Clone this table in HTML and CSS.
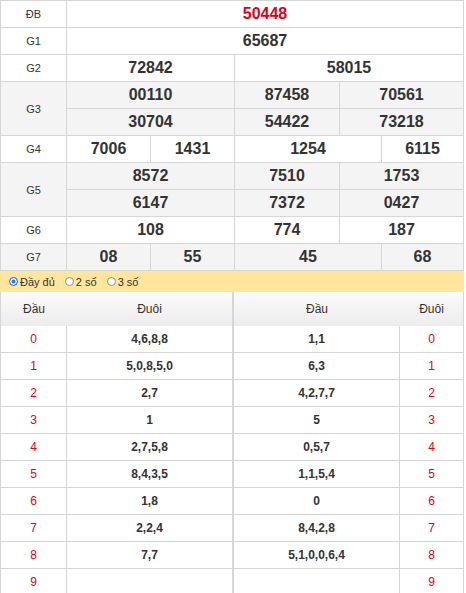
FILE: index.html
```html
<!DOCTYPE html>
<html lang="vi">
<head>
<meta charset="utf-8">
<title>Kết quả xổ số</title>
<link rel="stylesheet" href="styles.css">
</head>
<body>
<div class="results">
  <div class="lbl">ĐB</div><div class="val w5 red">50448</div>
  <div class="lbl">G1</div><div class="val w5">65687</div>
  <div class="lbl">G2</div><div class="val w2">72842</div><div class="val w3">58015</div>
  <div class="lbl alt rs2">G3</div><div class="val alt w2">00110</div><div class="val alt">87458</div><div class="val alt w2">70561</div>
  <div class="val alt w2">30704</div><div class="val alt">54422</div><div class="val alt w2">73218</div>
  <div class="lbl">G4</div><div class="val">7006</div><div class="val">1431</div><div class="val w2">1254</div><div class="val">6115</div>
  <div class="lbl alt rs2">G5</div><div class="val alt w2">8572</div><div class="val alt">7510</div><div class="val alt w2">1753</div>
  <div class="val alt w2">6147</div><div class="val alt">7372</div><div class="val alt w2">0427</div>
  <div class="lbl">G6</div><div class="val w2">108</div><div class="val">774</div><div class="val w2">187</div>
  <div class="lbl alt">G7</div><div class="val alt">08</div><div class="val alt">55</div><div class="val alt w2">45</div><div class="val alt">68</div>
</div>

<div class="bar">
  <span class="opt"><span class="radio on"></span>Đầy đủ</span>
  <span class="opt"><span class="radio"></span>2 số</span>
  <span class="opt"><span class="radio"></span>3 số</span>
</div>

<div class="lower">
  <div class="tbl left">
    <div class="hd">Đầu</div><div class="hd">Đuôi</div>
    <div class="num">0</div><div class="lst">4,6,8,8</div>
    <div class="num">1</div><div class="lst">5,0,8,5,0</div>
    <div class="num">2</div><div class="lst">2,7</div>
    <div class="num">3</div><div class="lst">1</div>
    <div class="num">4</div><div class="lst">2,7,5,8</div>
    <div class="num">5</div><div class="lst">8,4,3,5</div>
    <div class="num">6</div><div class="lst">1,8</div>
    <div class="num">7</div><div class="lst">2,2,4</div>
    <div class="num">8</div><div class="lst">7,7</div>
    <div class="num">9</div><div class="lst"></div>
  </div>
  <div class="tbl right">
    <div class="hd">Đầu</div><div class="hd">Đuôi</div>
    <div class="lst">1,1</div><div class="num">0</div>
    <div class="lst">6,3</div><div class="num">1</div>
    <div class="lst">4,2,7,7</div><div class="num">2</div>
    <div class="lst">5</div><div class="num">3</div>
    <div class="lst">0,5,7</div><div class="num">4</div>
    <div class="lst">1,1,5,4</div><div class="num">5</div>
    <div class="lst">0</div><div class="num">6</div>
    <div class="lst">8,4,2,8</div><div class="num">7</div>
    <div class="lst">5,1,0,0,6,4</div><div class="num">8</div>
    <div class="lst"></div><div class="num">9</div>
  </div>
</div>
</body>
</html>
```
FILE: styles.css
```css
* { box-sizing: border-box; margin: 0; padding: 0; }
html, body { overflow: hidden; }
body {
  font-family: "Liberation Sans", Arial, sans-serif;
  color: #333;
  background: #fff;
  width: 466px;
}

.results {
  display: grid;
  grid-template-columns: 66px 84px 84px 105px 42px 82px;
  grid-auto-rows: 27px;
  width: 464px;
  border-top: 1px solid #d6d6d6;
  border-left: 1px solid #d6d6d6;
}
.results > div {
  border-right: 1px solid #d6d6d6;
  border-bottom: 1px solid #d6d6d6;
  display: flex;
  align-items: center;
  justify-content: center;
}
.lbl { font-size: 11px; }
.val { font-size: 16px; font-weight: bold; }
.red { color: #e30016; }
.alt { background: #f4f4f4; }
.rs2 { grid-row: span 2; }
.w2 { grid-column: span 2; }
.w3 { grid-column: span 3; }
.w5 { grid-column: span 5; }

.bar {
  width: 464px;
  height: 21px;
  background: #ffe69c;
  display: flex;
  align-items: center;
  gap: 10px;
  padding-left: 9px;
  font-size: 11px;
  color: #333;
}
.opt { display: flex; align-items: center; gap: 2px; }
.radio {
  width: 9px;
  height: 9px;
  border-radius: 50%;
  border: 1px solid #8f8f8f;
  background: #fff;
}
.radio.on {
  border-color: #2b7ae4;
  background: #2b7ae4;
  box-shadow: inset 0 0 0 1.5px #fff;
}

.lower { display: flex; width: 464px; }
.tbl {
  display: grid;
  grid-template-rows: 34px;
  grid-auto-rows: 27px;
  border-left: 1px solid #d6d6d6;
}
.tbl.left { width: 233px; grid-template-columns: 66px 166px; }
.tbl.right { width: 231px; grid-template-columns: 166px 64px; }
.tbl > div {
  display: flex;
  align-items: center;
  justify-content: center;
  border-right: 1px solid #d6d6d6;
  border-bottom: 1px solid #d6d6d6;
}
.tbl > .hd {
  font-size: 12px;
  border-bottom: none;
  background: linear-gradient(#fbfbfb, #ececec);
}
.tbl > .hd:first-child { border-right: none; }
.num { color: #e30016; font-size: 12px; }
.lst { font-size: 12px; font-weight: bold; }
```
